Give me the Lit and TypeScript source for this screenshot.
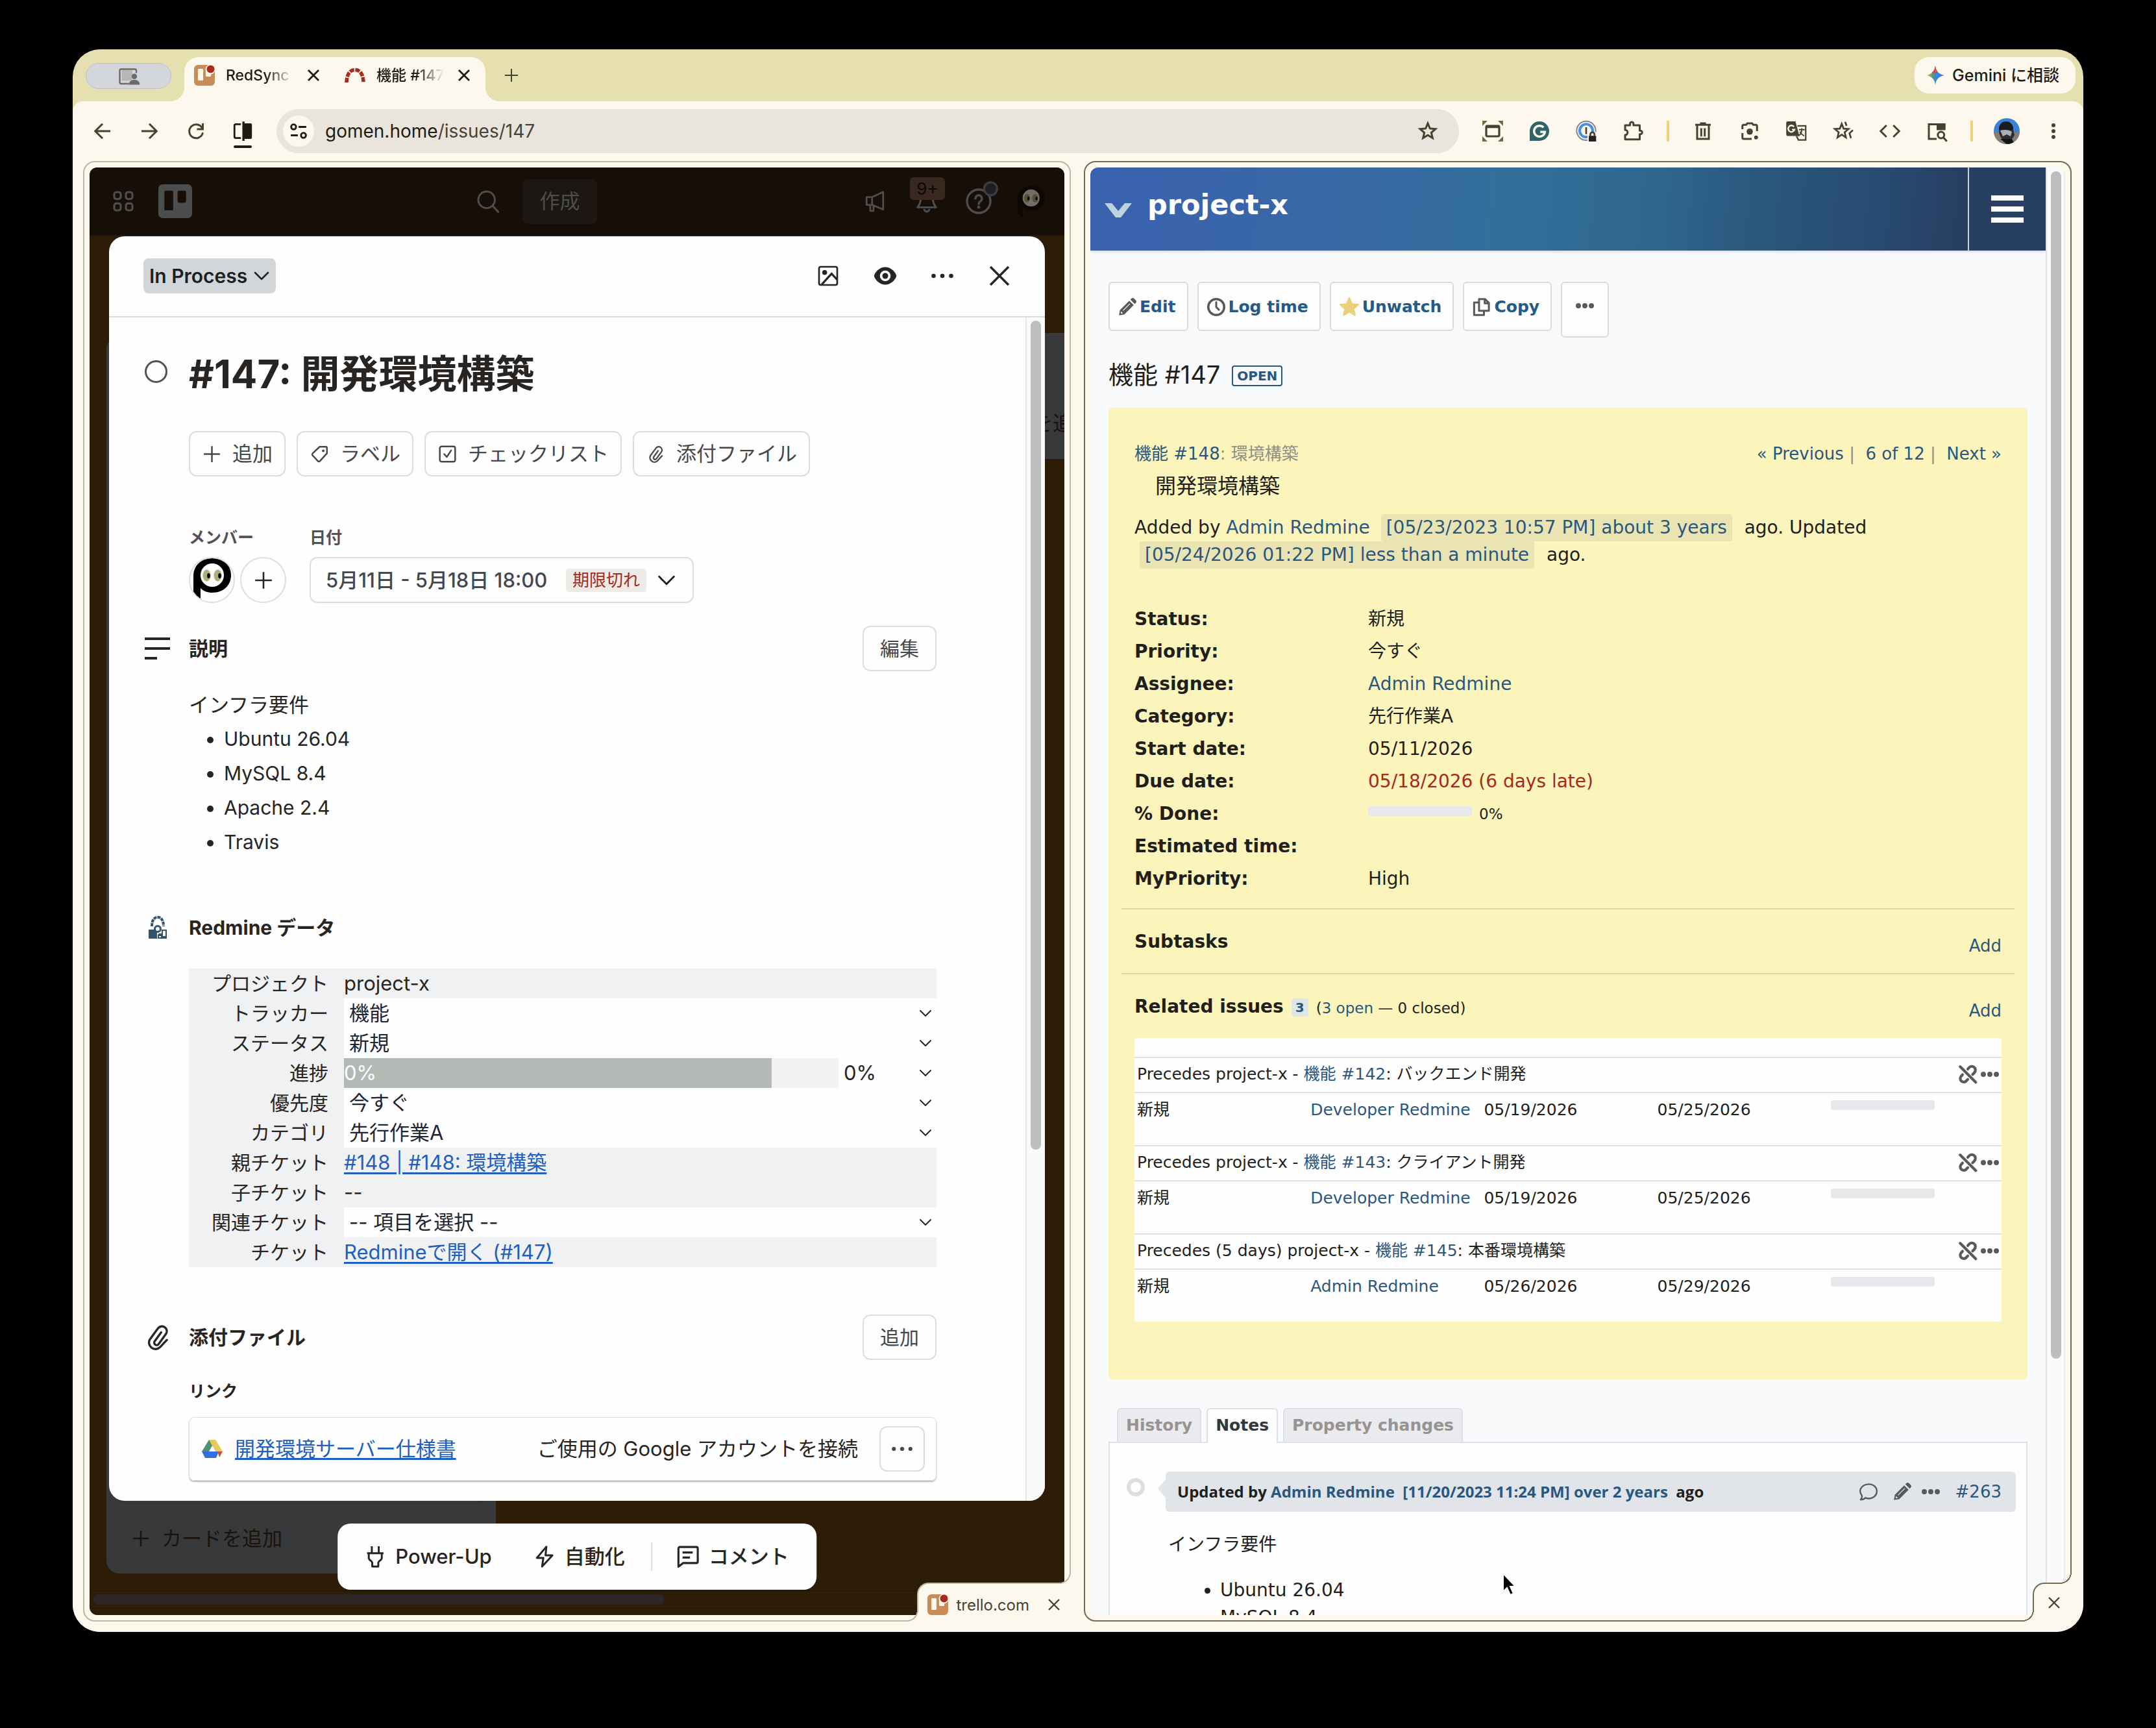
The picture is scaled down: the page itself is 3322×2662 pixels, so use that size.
import { LitElement, html, css, svg, nothing } from "lit";
import { customElement } from "lit/decorators.js";

/* ---------- shared styles ---------- */

const base = css`
  :host {
    display: block;
    box-sizing: border-box;
  }
  * {
    box-sizing: border-box;
  }
  button,
  select,
  input {
    font: inherit;
    color: inherit;
    margin: 0;
    padding: 0;
    border: 0;
    background: none;
  }
  button {
    display: inline-flex;
    align-items: center;
    justify-content: center;
    white-space: nowrap;
    cursor: pointer;
  }
  h1,
  h2,
  h3,
  p,
  ul {
    margin: 0;
    padding: 0;
    font-weight: inherit;
    font-size: inherit;
  }
  svg {
    display: block;
    flex: none;
    overflow: visible;
  }
  .line {
    fill: none;
    stroke: currentColor;
  }
  .round {
    stroke-linecap: round;
    stroke-linejoin: round;
  }
  .cream {
    stroke: #fdf8ee;
  }
  .steel {
    stroke: #85878a;
  }
  .azure {
    stroke: #4a8ee6;
  }
`;

/* ---------- icons ---------- */

const icon = (size: number, body: unknown, box = 24) =>
  html`<svg width=${size} height=${size} viewBox="0 0 ${box} ${box}" fill="currentColor" stroke-width="2" aria-hidden="true">${body}</svg>`;

const cross = svg`<path class="line" stroke-width="2.400" d="M4 4 20 20M20 4 4 20"/>`;
const smallCross = svg`<path class="line" stroke-width="2.800" d="M4 4 20 20M20 4 4 20"/>`;
const plus = svg`<path class="line" stroke-width="2.200" d="M12 1v22M1 12h22"/>`;
const chevron = svg`<path class="line round" d="M4 8l8 8 8-8"/>`;
const dots = svg`<circle cx="3" cy="12" r="2.200"/><circle cx="12" cy="12" r="2.200"/><circle cx="21" cy="12" r="2.200"/>`;
const fatDots = svg`<circle cx="3.400" cy="12" r="3.400"/><circle cx="12" cy="12" r="3.400"/><circle cx="20.600" cy="12" r="3.400"/>`;
const clip = svg`<path class="line round" d="M20.500 14.500l-6.200 6.600a6 6 0 0 1-9.500-7.200l7.700-10.400a4.500 4.500 0 0 1 7.300 5.200l-7 9.700a2.200 2.200 0 0 1-3.600-2.600l6-8.300"/>`;

const pencil = svg`
  <path fill-rule="evenodd" d="M1 23l1.200-7L14.600 3.600l5.800 5.800L8 21.800zM3.300 19.800l.9.900 2-.5-2.400-2.400zM6 16.200l9-9 .8.800-9 9z"/>
  <path d="M16 2.200l1.300-1.300a2.600 2.600 0 0 1 3.700 0l2.100 2.100a2.600 2.600 0 0 1 0 3.700L21.800 8z"/>`;

const trelloTab = svg`
  <rect width="32" height="32" rx="6" fill="#c88c58"/>
  <rect x="6" y="6" width="8" height="18" rx="1.500" fill="#fdf8ee"/>
  <rect x="18" y="6" width="8" height="12" rx="1.500" fill="#fdf8ee"/>
  <circle cx="25" cy="7" r="7.500" fill="#fdf8ee"/>
  <circle cx="25.500" cy="6.500" r="6" fill="#a92a20"/>`;

const redmineArc = svg`
  <path d="M3 27C3.500 13 9 7.500 16 7.500S28.500 13 29 27" fill="none" stroke="#a92a20" stroke-width="5.600" stroke-dasharray="7.200 1.600"/>`;

const face = svg`
  <path d="M5 59V28C5 11 17 0 34 0s29 10 29 26-12 27-29 27c-7 0-13-2-18-7v20c-5-2-9-4-11-7z" fill="#000"/>
  <circle cx="34" cy="26" r="18" fill="#fff"/>
  <ellipse cx="25.500" cy="26.500" rx="6" ry="9" fill="#a8ad82" stroke="#e5d796" stroke-width="1"/>
  <ellipse cx="42.500" cy="26.500" rx="6" ry="9" fill="#a8ad82" stroke="#e5d796" stroke-width="1"/>
  <ellipse cx="28.500" cy="27" rx="2.300" ry="4" fill="#000"/>
  <ellipse cx="45.500" cy="27" rx="2.300" ry="4" fill="#000"/>`;

/* ---------- browser chrome ---------- */

@customElement("browser-bar")
class BrowserBar extends LitElement {
  static styles = [
    base,
    css`
      :host {
        font-family: Inter, "Noto Sans CJK JP", sans-serif;
        color: #1f1b13;
      }
      .strip {
        display: flex;
        align-items: flex-start;
        height: 80px;
        padding: 12px 12px 0 20px;
        font-size: 23px;
        line-height: 32px;
        font-weight: 500;
      }
      .pill {
        width: 132px;
        height: 40px;
        margin-top: 9px;
        border: 1px solid #bfc1c4;
        border-radius: 20px;
        background: #d3d6da;
        color: #6d6b6a;
      }
      .tabs {
        position: relative;
        display: flex;
        height: 68px;
        margin-left: 20px;
        border-radius: 22px 22px 0 0;
        background: #fdf8ee;
      }
      .tabs::before,
      .tabs::after {
        content: "";
        position: absolute;
        bottom: 0;
        width: 22px;
        height: 22px;
      }
      .tabs::before {
        right: 100%;
        background: radial-gradient(circle at 0 0, transparent 22px, #fdf8ee 22px);
      }
      .tabs::after {
        left: 100%;
        background: radial-gradient(circle at 100% 0, transparent 22px, #fdf8ee 22px);
      }
      .tab {
        display: flex;
        align-items: center;
        width: 232px;
        height: 56px;
        padding-left: 15px;
      }
      .name {
        width: 104px;
        margin: 0 19px 0 17px;
        overflow: hidden;
        white-space: nowrap;
        mask-image: linear-gradient(90deg, #000 60%, transparent);
      }
      .new {
        width: 80px;
        height: 56px;
        color: #45422f;
      }
      .gemini {
        gap: 12px;
        height: 56px;
        margin-left: auto;
        padding: 0 25px 0 18px;
        border-radius: 22px;
        background: #fdf8ee;
        font-size: 25px;
      }
      .bar {
        display: flex;
        align-items: center;
        height: 92px;
        padding: 0 10px;
        border-radius: 16px 16px 0 0;
        background: #fdf8ee;
        color: #45422f;
      }
      .tool {
        width: 72px;
        height: 68px;
      }
      .split {
        flex-direction: column;
        gap: 5px;
        padding-top: 9px;
        color: #1f1b13;
      }
      .under {
        width: 28px;
        height: 4px;
        border-radius: 2px;
        background: currentColor;
      }
      .omni {
        flex: 1;
        display: flex;
        align-items: center;
        height: 68px;
        margin: 0 16px;
        padding: 0 20px 0 10px;
        border-radius: 34px;
        background: #e9e4dc;
      }
      .site {
        width: 48px;
        height: 48px;
        border-radius: 24px;
        background: #fdf8ee;
        color: #1f1b13;
      }
      .url {
        flex: 1;
        margin-left: 17px;
        font-size: 28px;
        line-height: 40px;
        color: #1f1b13;
        white-space: nowrap;
      }
      .path {
        color: #45423a;
      }
      .star {
        width: 56px;
        height: 56px;
      }
      .sep {
        width: 4px;
        height: 32px;
        margin: 0 16px;
        background: #efd27c;
      }
    `,
  ];

  private tool(label: string, body: unknown, size = 36) {
    return html`<button class="tool" aria-label=${label}>${icon(size, body)}</button>`;
  }

  render() {
    return html`
      <div class="strip">
        <button class="pill" aria-label="Shared tabs">
          ${icon(36, svg`
            <path fill="#b9b7b4" d="M5 6h11v11H5z"/>
            <path class="line" stroke-width="1.600" d="M12.500 20H4.500A1.500 1.500 0 0 1 3 18.500v-12A1.500 1.500 0 0 1 4.500 5h14A1.500 1.500 0 0 1 20 6.500V9"/>
            <circle cx="18" cy="12.500" r="2.800"/>
            <path d="M12.500 21c0-3.600 2.400-5 5.500-5s5.500 1.400 5.500 5z"/>`)}
        </button>
        <div class="tabs">
          <div class="tab">
            ${icon(32, trelloTab, 32)}<span class="name">RedSync</span>
            <button aria-label="Close tab">${icon(24, smallCross)}</button>
          </div>
          <div class="tab">
            ${icon(32, redmineArc, 32)}<span class="name">機能 #147</span>
            <button aria-label="Close tab">${icon(24, smallCross)}</button>
          </div>
        </div>
        <button class="new" aria-label="New tab">${icon(22, plus)}</button>
        <button class="gemini">
          <svg width="28" height="30" viewBox="0 0 28 30" aria-hidden="true">
            <defs>
              <linearGradient id="g" x1="0" y1="0" x2="1" y2="0">
                <stop offset="0" stop-color="#e8c04b" />
                <stop offset=".35" stop-color="#4c9f7c" />
                <stop offset=".6" stop-color="#3b7ded" />
              </linearGradient>
            </defs>
            <path fill="url(#g)" d="M14 0c1 9 5 13 14 15-9 2-13 6-14 15C13 21 9 17 0 15 9 13 13 9 14 0z" />
            <path fill="#d2504a" d="M14 0c.5 5 2 8 4 10l-7 2-3-1c3-2 5-5 6-11z" />
          </svg>
          Gemini に相談
        </button>
      </div>
      <div class="bar">
        ${this.tool("Back", svg`<path class="line" d="M20 12H5M12 4.500 4.500 12l7.500 7.500"/>`)}
        ${this.tool("Forward", svg`<path class="line" d="M4 12h15M12 4.500l7.500 7.500-7.500 7.500"/>`)}
        ${this.tool("Reload", svg`<path class="line" d="M18.600 9.500A7 7 0 1 0 19 13.500"/><path class="line" d="M19 4v6h-6"/>`)}
        <button class="tool split" aria-label="Split view">
          ${icon(34, svg`
            <path class="line" d="M10 4.500H4.500A1.500 1.500 0 0 0 3 6v12a1.500 1.500 0 0 0 1.500 1.500H10"/><path d="M13 3.500h7.500A1.500 1.500 0 0 1 22 5v14a1.500 1.500 0 0 1-1.500 1.500H13z"/>
            <path class="line" stroke-width="2.400" d="M12.800 1.500v21"/>`)}
          <span class="under"></span>
        </button>
        <div class="omni">
          <button class="site" aria-label="Site information">
            ${icon(26, svg`<g class="line" stroke-width="2.600"><circle cx="5" cy="6" r="3.500"/><path d="M12 6h11M1 18h10"/><circle cx="19" cy="18" r="3.500"/></g>`)}
          </button>
          <span class="url">gomen.home<span class="path">/issues/147</span></span>
          <button class="star" aria-label="Bookmark">
            ${icon(36, svg`<path class="line" d="M12 4l2.200 5.300 5.700.5-4.300 3.700 1.300 5.600L12 16.100l-4.900 3 1.300-5.600-4.300-3.700 5.700-.5z"/>`)}
          </button>
        </div>
        ${this.tool("Screenshot", svg`
          <path d="M0 0h6L0 6zM24 0h-6l6 6zM0 24h6l-6-6zM24 24h-6l6-6z" fill="#6d6a44"/>
          <rect class="line" x="4.500" y="6" width="15" height="12" rx="1.500" stroke-width="2.400"/><path d="M4 5h16v3.500H4z"/>`, 32)}
        ${this.tool("Grammar", svg`
          <path fill="#2e6468" d="M12 0a12 12 0 1 1 0 24H0V12A12 12 0 0 1 12 0z"/>
          <path class="line cream" stroke-width="2.800" d="M17 7.500A6.700 6.700 0 1 0 18.700 13H13"/>`, 30)}
        ${this.tool("Passwords", svg`
          <circle class="line steel" cx="12" cy="11.500" r="11" stroke-width="1.500"/>
          <circle class="line azure" cx="12" cy="11.500" r="7.500" stroke-width="3"/>
          <path class="line" d="M12 7.500v8"/>
          <rect x="13.500" y="13" width="12" height="12" fill="#fdf8ee"/>
          <path fill="#222" d="M15 17.500h8.500V24H15z"/><path class="line" d="M16.800 18v-2.200a2.400 2.400 0 0 1 4.800 0V18"/>`, 32)}
        ${this.tool("Extensions", svg`<path class="line" stroke-linejoin="round" d="M4 6h5V4.500a1.800 1.800 0 0 1 3.600 0V6H19v5.500h.7a1.800 1.800 0 0 1 0 3.600H19V20.500H4V16a2.600 2.600 0 0 0 0-5.200z"/>`)}
        <span class="sep"></span>
        ${this.tool("Clear data", svg`<path class="line" d="M6 6.500V20h12V6.500M4 5.500h16M9 4h6M10.200 9v8.500M13.800 9v8.500"/>`)}
        ${this.tool("Lens", svg`
          <path class="line" d="M4.500 10V7A1.500 1.500 0 0 1 6 5.500h2.500l1-1.500h5l1 1.500H18A1.500 1.500 0 0 1 19.500 7v5M4.500 14v4.500A1.500 1.500 0 0 0 6 20h8"/>
          <circle cx="12" cy="12.500" r="3.200"/><circle cx="18.500" cy="18.500" r="2"/>`)}
        ${this.tool("Translate", svg`
          <path d="M3 2h8l4 15H3a1.500 1.500 0 0 1-1.500-1.500v-12A1.500 1.500 0 0 1 3 2z"/>
          <path class="line" stroke-width="1.500" d="M13 6.500h8.500V21H14l-2-4"/>
          <path class="line cream" stroke-width="1.600" d="M9.500 7.500A3.300 3.300 0 1 0 10 10.500H7.500"/>
          <path class="line" stroke-width="1.300" d="M14.500 10.500h6M17.500 9v1.500c0 3-1.500 5-3.500 6.500M15.500 12.500c1 2 2.500 3.500 4.500 4.500"/>`)}
        ${this.tool("Reading list", svg`
          <path class="line" stroke-width="1.800" d="M10.500 4.500l1.900 4.900 5.100.4-4 3.400 1.300 5.300-4.300-2.900-4.300 2.900 1.200-5.300-4-3.400 5.200-.4z"/>
          <path class="line" stroke-width="1.800" d="M14 2.500l1.500 4M22 11l-3.500 3.200 1.500 5"/>`)}
        ${this.tool("Developer tools", svg`<path class="line" d="M8.500 6l-6 6 6 6M15.500 6l6 6-6 6"/>`)}
        ${this.tool("Page search", svg`
          <path class="line" d="M12 20H4V5h16v5"/><path d="M12 4h9v7h-9z"/>
          <circle class="line" cx="16.500" cy="16" r="3.300"/><path class="line" d="M19 18.500l3.500 4"/>`)}
        <span class="sep"></span>
        <button class="tool" aria-label="Profile">
          ${icon(40, svg`
            <clipPath id="av"><circle cx="20" cy="20" r="20"/></clipPath>
            <g clip-path="url(#av)">
              <rect width="40" height="40" fill="#3b82d6"/><rect y="22" width="40" height="18" fill="#8b7a70"/>
              <ellipse cx="19" cy="16" rx="11" ry="11" fill="#1b1c20"/><path d="M8 22c3 16 18 18 24 4l-2-8H9z" fill="#2b2c30"/>
              <path d="M10 19c6-2 14-1 18 2l-2 7-6-3-6 3z" fill="#a9adb0"/><path d="M10 32l10 8h12l-4-8z" fill="#131417"/>
            </g>`, 40)}
        </button>
        ${this.tool("Menu", svg`<circle cx="12" cy="6" r="2"/><circle cx="12" cy="12" r="2"/><circle cx="12" cy="18" r="2"/>`)}
      </div>
    `;
  }
}

/* ---------- Trello pane ---------- */

type Field = { label: string; kind: "text" | "select" | "link" | "progress"; value: string };

const fields: Field[] = [
  { label: "プロジェクト", kind: "text", value: "project-x" },
  { label: "トラッカー", kind: "select", value: "機能" },
  { label: "ステータス", kind: "select", value: "新規" },
  { label: "進捗", kind: "progress", value: "0%" },
  { label: "優先度", kind: "select", value: "今すぐ" },
  { label: "カテゴリ", kind: "select", value: "先行作業A" },
  { label: "親チケット", kind: "link", value: "#148 | #148: 環境構築" },
  { label: "子チケット", kind: "text", value: "--" },
  { label: "関連チケット", kind: "select", value: "-- 項目を選択 --" },
  { label: "チケット", kind: "link", value: "Redmineで開く (#147)" },
];

@customElement("trello-pane")
class TrelloPane extends LitElement {
  static styles = [
    base,
    css`
      :host {
        position: relative;
        height: 100%;
        overflow: hidden;
        border-radius: 12px 12px 0 12px;
        background: #2d1c06;
        font-family: Inter, "Noto Sans CJK JP", sans-serif;
        font-size: 31px;
        line-height: 46px;
        color: #272422;
      }
      .top {
        display: flex;
        align-items: center;
        height: 106px;
        padding: 0 31px 0 36px;
        border-bottom: 2px solid #221a10;
        background: #160e07;
        color: #4c4d4d;
      }
      .logo {
        margin: 0 auto 0 38px;
      }
      .create {
        width: 115px;
        height: 69px;
        margin: 0 407px 0 35px;
        border-radius: 8px;
        background: #1c1712;
      }
      .top-icons {
        display: grid;
        grid-auto-flow: column;
        grid-auto-columns: 42px;
        justify-items: center;
        align-items: center;
        gap: 38px;
      }
      .bell {
        position: relative;
      }
      .badge {
        position: absolute;
        left: -7px;
        top: -18px;
        width: 54px;
        height: 35px;
        border-radius: 6px;
        background: #38281f;
        color: #0c0805;
        font-size: 26px;
        line-height: 35px;
        text-align: center;
      }
      .column {
        position: absolute;
        left: 26px;
        top: 260px;
        bottom: 64px;
        width: 600px;
        border-radius: 20px;
        background: #38393a;
        color: #1a130d;
        display: flex;
        flex-direction: column;
        justify-content: flex-end;
      }
      .card-edge {
        display: flex;
        justify-content: space-between;
        height: 40px;
        margin: 0 16px;
        padding: 0 40px 0 106px;
        border: 1px solid #303133;
        border-top: 0;
        border-radius: 0 0 12px 12px;
      }
      .add-card {
        display: flex;
        align-items: center;
        gap: 19px;
        height: 108px;
        padding-left: 40px;
      }
      .next {
        position: absolute;
        right: 0;
        top: 255px;
        width: 60px;
        height: 194px;
        padding: 116px 0 0 11px;
        background: #38393a;
        color: #1a130d;
        overflow: hidden;
        white-space: nowrap;
      }
      .hscroll {
        position: absolute;
        left: 0;
        right: 0;
        bottom: 10px;
        height: 28px;
        padding: 5px 6px;
        border-top: 1px solid #221505;
        border-bottom: 1px solid #221505;
      }
      .hthumb {
        width: 59%;
        height: 16px;
        border-radius: 6px;
        background: #2e2624;
      }
      .modal {
        position: absolute;
        inset: 106px 30px 176px 30px;
        display: flex;
        flex-direction: column;
        overflow: hidden;
        border-radius: 24px;
        background: #fefefe;
      }
      .modal-head {
        flex: none;
        display: flex;
        align-items: center;
        height: 125px;
        padding: 0 40px 2px 53px;
        border-bottom: 2px solid #dcdde1;
      }
      .status {
        gap: 7px;
        height: 54px;
        margin-right: auto;
        padding: 0 7px 0 9px;
        border-radius: 8px;
        background: #d3d6d9;
        color: #1e1f21;
        font-weight: 600;
        font-size: 30px;
      }
      .head-btn {
        width: 88px;
        height: 60px;
      }
      .head-btn.last {
        width: 60px;
        margin-left: 14px;
      }
      .modal-main {
        flex: 1;
        min-height: 0;
        display: flex;
      }
      .content {
        flex: 1;
        min-width: 0;
        padding: 51px 137px 30px 55px;
        display: grid;
        grid-template-columns: 68px minmax(0, 1fr);
        align-content: start;
      }
      .scroll {
        width: 30px;
        padding: 5px 6px;
        border-left: 2px solid #e4e5e9;
        background: #fafafb;
      }
      .thumb {
        height: calc(70% + 8px);
        border-radius: 8px;
        background: #bcbdbe;
      }
      .wide {
        grid-column: 2;
      }
      .ring {
        width: 35px;
        height: 35px;
        margin-top: 15px;
        border: 3px solid #505258;
        border-radius: 50%;
        appearance: none;
      }
      h1 {
        font-size: 60px;
        line-height: 72px;
        font-weight: 700;
        white-space: nowrap;
      }
      .actions {
        display: flex;
        gap: 17px;
        margin-top: 52px;
      }
      .btn {
        gap: 18px;
        height: 70px;
        padding: 0 18px 0 20px;
        border: 2px solid #dcdde1;
        border-radius: 12px;
        color: #44474b;
      }
      .meta {
        display: flex;
        gap: 36px;
        margin-top: 76px;
      }
      .meta h3,
      .links {
        font-size: 25px;
        line-height: 36px;
        font-weight: 600;
        color: #505258;
      }
      .meta-row {
        display: flex;
        gap: 8px;
        margin-top: 12px;
      }
      .round-btn {
        width: 71px;
        height: 71px;
        border: 2px solid #dcdde1;
        border-radius: 50%;
        overflow: hidden;
      }
      .date {
        gap: 14px;
        width: 592px;
        height: 71px;
        padding: 0 23px;
        justify-content: flex-start;
        border: 2px solid #dcdde1;
        border-radius: 12px;
        color: #44474b;
        font-weight: 500;
      }
      .date svg {
        color: #1e1f21;
      }
      .late {
        margin-left: auto;
        padding: 0 10px;
        border-radius: 4px;
        background: #eeebe7;
        color: #a52a20;
        font-size: 26px;
        line-height: 36px;
        font-weight: 400;
      }
      .sec-icon {
        align-self: center;
      }
      .sec {
        display: flex;
        align-items: center;
        justify-content: space-between;
        font-size: 30px;
        font-weight: 700;
      }
      .sec .btn {
        width: 114px;
        padding: 0;
        font-weight: 400;
      }
      .s1 {
        margin-top: 35px;
      }
      .s2 {
        margin-top: 82px;
      }
      .s3 {
        margin-top: 73px;
      }
      .desc {
        margin-top: 25px;
        line-height: 53px;
      }
      .desc ul {
        padding-left: 54px;
        font-size: 30px;
      }
      .data {
        width: 100%;
        margin-top: 40px;
        border-spacing: 0;
        table-layout: fixed;
        background: #f0f1f3;
      }
      .data th {
        width: 239px;
        height: 46px;
        padding: 0 24px 0 0;
        text-align: right;
        font-size: 30px;
        font-weight: 400;
        white-space: nowrap;
      }
      .data td {
        padding: 0;
      }
      .pick {
        display: flex;
        align-items: center;
        justify-content: space-between;
        height: 46px;
        padding-right: 5px;
        background: #fefefe;
      }
      .pick select {
        flex: 1;
        height: 46px;
        padding-left: 8px;
        appearance: none;
        margin-right: 20px;
        color: #1f2533;
      }
      .meter {
        width: 762px;
        height: 46px;
        background: #f2f2f4;
      }
      .fill {
        height: 46px;
        color: #fefefe;
        background: #b3bab6;
      }
      .percent {
        flex: 1;
        padding-left: 8px;
      }
      a {
        color: #1f5fc4;
        text-underline-offset: 4px;
      }
      .links {
        margin-top: 30px;
        color: #272422;
      }
      .file {
        display: flex;
        align-items: center;
        height: 98px;
        margin-top: 22px;
        padding: 0 17px 0 19px;
        border: 1px solid #dcdde1;
        border-radius: 8px;
        box-shadow: 0 2px 2px #b7babd;
        white-space: nowrap;
      }
      .file a {
        margin: 0 auto 0 19px;
        text-underline-offset: 3px;
      }
      .file .btn {
        width: 70px;
        margin-left: 33px;
        padding: 0;
      }
      .dock {
        position: absolute;
        left: 50%;
        bottom: 39px;
        transform: translateX(-50%);
        display: flex;
        align-items: center;
        height: 102px;
        padding: 0 42px;
        border-radius: 20px;
        background: #fefefe;
        font-weight: 500;
      }
      .dock button {
        gap: 15px;
      }
      .dock .auto {
        margin: 0 40px 0 65px;
      }
      .dock .rule {
        width: 2px;
        height: 44px;
        margin-right: 38px;
        background: #dcdde1;
      }
    `,
  ];

  private field(f: Field, i: number) {
    const id = `f${i}`;
    const arrow = icon(24, chevron);
    const cell =
      f.kind === "select"
        ? html`<div class="pick"><select id=${id}><option>${f.value}</option></select>${arrow}</div>`
        : f.kind === "link"
          ? html`<a href="#">${f.value}</a>`
          : f.kind === "progress"
            ? html`<div class="pick">
                <div class="meter"><div class="fill" style="width:86.5%">${f.value}</div></div>
                <span class="percent">${f.value}</span>${arrow}
              </div>`
            : f.value;
    return html`<tr>
      <th scope="row">${f.kind === "select" ? html`<label for=${id}>${f.label}</label>` : f.label}</th>
      <td>${cell}</td>
    </tr>`;
  }

  render() {
    return html`
      <header class="top">
        ${icon(32, svg`<g class="line" stroke-width="2.400"><rect x="1.500" y="1.500" width="7.500" height="8" rx="2.500"/><rect x="15" y="1.500" width="7.500" height="8" rx="2.500"/><rect x="1.500" y="14.500" width="7.500" height="8" rx="2.500"/><rect x="15" y="14.500" width="7.500" height="8" rx="2.500"/></g>`)}
        <span class="logo">${icon(52, svg`<path fill-rule="evenodd" d="M3 0h18a3 3 0 0 1 3 3v18a3 3 0 0 1-3 3H3a3 3 0 0 1-3-3V3a3 3 0 0 1 3-3zM5.300 4.500h4.200a1 1 0 0 1 1 1V17.500a1 1 0 0 1-1 1H5.300a1 1 0 0 1-1-1V5.500a1 1 0 0 1 1-1zM14.700 4.500h4a1 1 0 0 1 1 1V12a1 1 0 0 1-1 1h-4a1 1 0 0 1-1-1V5.500a1 1 0 0 1 1-1z"/>`)}</span>
        ${icon(36, svg`<circle class="line" cx="10.500" cy="10.500" r="8.500"/><path class="line round" d="M17 17l5.500 6"/>`)}
        <button class="create">作成</button>
        <div class="top-icons">
          ${icon(34, svg`<path class="line round" d="M3 7.500h6L21 2v19L9 16H3zM9 7.500V16M7 16v6.500h3.500V17"/>`)}
          <span class="bell">${icon(38, svg`<path class="line" stroke-linejoin="round" d="M6 10a6 6 0 0 1 12 0c0 3 .5 5 3 8H3c2.500-3 3-5 3-8zM9.500 19.500a2.500 2.500 0 0 0 5 0"/>`)}<span class="badge">9+</span></span>
          ${icon(40, svg`
            <circle class="line" cx="12" cy="12" r="10.800"/>
            <path class="line round" d="M9 9.500a3 3 0 1 1 4.500 2.600c-1 .6-1.500 1-1.500 2.400"/><circle cx="12" cy="17.500" r="1.400"/>
            <circle cx="23" cy="0.500" r="6" fill="#1d1d22" stroke="#3c3d42" stroke-width="2"/>`)}
          ${icon(48, svg`<g opacity=".4">${face}</g>`, 66)}
        </div>
      </header>

      <div class="column">
        <div class="card-edge">
          ${icon(24, svg`<circle cx="12" cy="-5" r="12"/>`)}
          ${icon(48, svg`<path d="M3-10h7V9l-5-2zM10 7c6 3 12-1 12-6V-8H10z"/>`)}
        </div>
        <div class="add-card">${icon(26, plus)} カードを追加</div>
      </div>
      <div class="next">を追</div>
      <div class="hscroll"><div class="hthumb"></div></div>

      <section class="modal">
        <div class="modal-head">
          <button class="status">In Process ${icon(30, chevron)}</button>
          <button class="head-btn" aria-label="Cover">
            ${icon(32, svg`<rect class="line" x="1.500" y="1.500" width="21" height="21" rx="2"/><circle cx="8" cy="8" r="2.800"/><path class="line" stroke-width="2.400" d="M4.500 22L16 9.500l6.500 7"/>`)}
          </button>
          <button class="head-btn" aria-label="Watch">
            ${icon(36, svg`<path d="M12 3c6 0 11 5.500 11.500 9-.5 3.500-5.500 9-11.500 9S1 15.500.5 12C1 8.500 6 3 12 3z"/><circle cx="12" cy="12" r="5.500" fill="#fefefe"/><circle cx="12" cy="12" r="3"/>`)}
          </button>
          <button class="head-btn" aria-label="Actions">${icon(36, dots)}</button>
          <button class="head-btn last" aria-label="Close">${icon(42, svg`<path class="line" d="M4 4 20 20M20 4 4 20"/>`)}</button>
        </div>
        <div class="modal-main">
          <div class="content">
            <input class="ring" type="checkbox" aria-label="完了" />
            <h1>#147: 開発環境構築</h1>

            <div class="actions wide">
              <button class="btn">${icon(27, plus)}追加</button>
              <button class="btn">
                ${icon(27, svg`<path class="line" stroke-width="2.200" stroke-linejoin="round" d="M12 2h8.500A1.500 1.500 0 0 1 22 3.500V11L12.500 21.500a2 2 0 0 1-3 0L2.500 14a2 2 0 0 1 0-3z"/><circle cx="17" cy="7.500" r="1.800"/>`)}ラベル
              </button>
              <button class="btn">
                ${icon(27, svg`<rect class="line" stroke-width="2.200" x="1.500" y="1.500" width="21" height="21" rx="2.500"/><path class="line round" stroke-width="2.200" d="M7.500 12l3.500 4 6-9"/>`)}チェックリスト
              </button>
              <button class="btn">${icon(27, clip)}添付ファイル</button>
            </div>

            <div class="meta wide">
              <div>
                <h3>メンバー</h3>
                <div class="meta-row">
                  <button class="round-btn" aria-label="メンバー">${icon(67, face, 67)}</button>
                  <button class="round-btn" aria-label="メンバーを追加">${icon(28, plus)}</button>
                </div>
              </div>
              <div>
                <h3>日付</h3>
                <div class="meta-row">
                  <button class="date">5月11日 - 5月18日 18:00<span class="late">期限切れ</span>${icon(34, chevron)}</button>
                </div>
              </div>
            </div>

            <span class="sec-icon s1">
              <svg width="39" height="34" viewBox="0 0 39 34" fill="currentColor" aria-hidden="true"><path d="M0 0h39v4H0zM0 15h39v4H0zM0 30h19v4H0z" /></svg>
            </span>
            <div class="sec s1"><h2>説明</h2><button class="btn">編集</button></div>
            <div class="desc wide">
              <p>インフラ要件</p>
              <ul>
                <li>Ubuntu 26.04</li>
                <li>MySQL 8.4</li>
                <li>Apache 2.4</li>
                <li>Travis</li>
              </ul>
            </div>

            <span class="sec-icon s2">
              <svg width="40" height="36" viewBox="0 0 40 36" fill="#34536f" aria-hidden="true">
                <path d="M11 16c0-10 4-14 9-14s9 4 9 14" fill="none" stroke="#34536f" stroke-width="4" stroke-dasharray="5 1" />
                <path d="M6 21h9l4 5v9H7a1 1 0 0 1-1-1z" />
                <circle cx="20" cy="20" r="4.500" fill="#fefefe" stroke="#34536f" stroke-width="3" />
                <path fill-rule="evenodd" d="M22 27h4v-6h8v14H20v-6zM28 23v8h4v-8zM22 31h3v2h-3z" />
              </svg>
            </span>
            <div class="sec s2"><h2>Redmine データ</h2></div>
            <table class="data wide">
              <tbody>
                ${fields.map((f, i) => this.field(f, i))}
              </tbody>
            </table>

            <span class="sec-icon s3">${icon(40, clip)}</span>
            <div class="sec s3"><h2>添付ファイル</h2><button class="btn">追加</button></div>
            <h3 class="links wide">リンク</h3>
            <div class="file wide">
              <svg width="32" height="28" viewBox="0 0 32 28" aria-hidden="true">
                <path fill="#4f9174" d="M11 0h5l3 6L7 26 0 18z" />
                <path fill="#e9c95c" d="M11 0h10l11 18H21z" />
                <path fill="#2f6fe0" d="M6 18h20l-4 10H5L0 18z" />
                <path fill="#c9523b" d="M24 18h8l-5 9z" />
                <path fill="#fefefe" d="M16 9l5 9H11z" />
              </svg>
              <a href="#">開発環境サーバー仕様書</a>
              <span>ご使用の Google アカウントを接続</span>
              <button class="btn" aria-label="その他">${icon(34, dots)}</button>
            </div>
          </div>
          <div class="scroll"><div class="thumb"></div></div>
        </div>
      </section>

      <nav class="dock">
        <button>
          ${icon(32, svg`<path class="line" stroke-width="2.200" stroke-linejoin="round" d="M8 0v7M16 0v7M2.500 8h19M4.500 8v6c0 2 4 3 4 5v4.500h7V19c0-2 4-3 4-5V8"/>`)}Power-Up
        </button>
        <button class="auto">
          ${icon(32, svg`<path class="line" stroke-width="2.200" stroke-linejoin="round" d="M14 .5L3 13.500h7.500l-1.500 10L21 10.500h-8z"/>`)}自動化
        </button>
        <span class="rule"></span>
        <button>
          ${icon(34, svg`<path class="line" stroke-width="2.200" stroke-linejoin="round" d="M3 1.500h18A1.500 1.500 0 0 1 22.500 3v14.500A1.500 1.500 0 0 1 21 19H6.500l-5 4V3A1.500 1.500 0 0 1 3 1.500z"/><path class="line" stroke-width="2.200" d="M6 7.500h11M6 13h8"/>`)}コメント
        </button>
      </nav>
    `;
  }
}

/* ---------- Redmine pane ---------- */

const relations = [
  { lead: "Precedes project-x - ", id: "機能 #142", title: "バックエンド開発", who: "Developer Redmine", start: "05/19/2026", due: "05/25/2026" },
  { lead: "Precedes project-x - ", id: "機能 #143", title: "クライアント開発", who: "Developer Redmine", start: "05/19/2026", due: "05/25/2026" },
  { lead: "Precedes (5 days) project-x - ", id: "機能 #145", title: "本番環境構築", who: "Admin Redmine", start: "05/26/2026", due: "05/29/2026" },
];

@customElement("redmine-pane")
class RedminePane extends LitElement {
  static styles = [
    base,
    css`
      :host {
        position: relative;
        height: 100%;
        display: flex;
        overflow: hidden;
        border-radius: 12px 12px 0 12px;
        background: #f9fafc;
        font-family: "DejaVu Sans", "Noto Sans CJK JP", sans-serif;
        font-size: 28px;
        line-height: 42px;
        color: #221e1b;
      }
      a {
        color: #2a5780;
        text-decoration: none;
      }
      .page {
        flex: 1;
        min-width: 0;
      }
      .scroll {
        width: 30px;
        padding: 6px 6px;
        border-left: 2px solid #e1e3e8;
        border-right: 2px solid #ececee;
        background: #fafafc;
      }
      .thumb {
        width: 16px;
        height: calc(82% + 10px);
        border-radius: 8px;
        background: #bbbdbf;
      }
      .top {
        display: flex;
        align-items: center;
        height: 128px;
        background: linear-gradient(95deg, #3a61af 0%, #3869a4 28%, #32709b 43%, #2f678e 59%, #2b587f 69%, #284a70 83%, #273f61 91%);
        box-shadow: 0 2px 4px #d5dae2;
        color: #fefefe;
      }
      .project {
        gap: 24px;
        margin: 0 auto 14px 22px;
        font-size: 43px;
        font-weight: 700;
        line-height: 60px;
      }
      .project svg {
        margin-top: 18px;
      }
      .burger {
        width: 120px;
        height: 128px;
        border-left: 2px solid #c8d0da;
      }
      .body {
        padding: 48px 28px 0;
      }
      .tools {
        display: flex;
        align-items: flex-start;
        gap: 14px;
        height: 86px;
        font-size: 25px;
        font-weight: 700;
        color: #235a87;
      }
      .tools button {
        gap: 5px;
        height: 76px;
        padding: 2px 17px 0 13px;
        border: 2px solid #d9dadd;
        border-radius: 6px;
        background: #fefefe;
      }
      .tools svg,
      .gray {
        color: #58595c;
      }
      .tools .more {
        width: 74px;
        height: 86px;
        padding: 0 0 12px;
      }
      .headline {
        display: flex;
        align-items: center;
        gap: 18px;
        margin: 32px 0 26px;
        font-family: Inter, "Noto Sans CJK JP", sans-serif;
        font-size: 38px;
        line-height: 50px;
        white-space: nowrap;
      }
      .open {
        margin-top: 4px;
        padding: 0 6px;
        border: 2px solid #2a5780;
        border-radius: 4px;
        font-family: "DejaVu Sans", sans-serif;
        font-size: 20px;
        font-weight: 700;
        line-height: 28px;
        color: #2a5780;
      }
      .issue {
        padding: 53px 40px 89px;
        border-radius: 6px;
        background: #fbf4bb;
      }
      .trail {
        display: flex;
        justify-content: space-between;
        font-size: 26px;
        line-height: 36px;
        color: #8f8f8a;
        white-space: pre;
      }
      .subject {
        margin: 6px 0 17px 32px;
        font-size: 32px;
        line-height: 52px;
      }
      .when {
        margin: 0 10px 0 8px;
        padding: 4px 8px 5px;
        border-radius: 4px;
        background: #eae4b3;
        white-space: nowrap;
      }
      .author {
        padding-right: 120px;
      }
      .attrs {
        margin: 53px 0 0;
        display: grid;
        grid-template-columns: 360px 1fr;
        line-height: 50px;
      }
      .attrs dt {
        font-weight: 700;
      }
      .attrs dd {
        margin: 0;
      }
      .overdue {
        color: #a5291f;
      }
      .done {
        display: flex;
        gap: 11px;
        font-size: 23px;
      }
      .progress {
        display: block;
        width: 160px;
        height: 15px;
        border-radius: 3px;
        background: #e7e8ec;
      }
      .done .progress {
        margin-top: 13px;
      }
      .block {
        display: flex;
        align-items: center;
        height: 100px;
        margin: 0 -20px;
        padding: 2px 20px 0;
        border-top: 2px solid #ddd7a4;
      }
      .first {
        margin-top: 20px;
      }
      .block h3 {
        font-weight: 700;
      }
      .count {
        margin: 2px 12px 0 12px;
        padding: 0 6px;
        border-radius: 4px;
        background: #dfe7e6;
        color: #2a5780;
        font-size: 20px;
        font-weight: 700;
        line-height: 28px;
      }
      .sum {
        font-size: 23px;
        padding-top: 4px;
      }
      .add {
        margin: 12px 0 0 auto;
        font-size: 26px;
      }
      .rel {
        width: 100%;
        padding-top: 29px;
        border-spacing: 0;
        table-layout: fixed;
        border-radius: 4px;
        background: #fefefe;
        font-size: 25px;
        line-height: 36px;
      }
      .rel td {
        height: 54px;
        padding: 0 4px 2px;
        border-top: 2px solid #dee0e5;
        white-space: nowrap;
      }
      .rel .info td {
        height: 82px;
        padding-top: 8px;
        vertical-align: top;
      }
      .rel .info .progress {
        margin-top: 3px;
      }
      .rel-row {
        display: flex;
        align-items: center;
        gap: 6px;
      }
      .rel-text {
        flex: 1;
      }
      .tabs {
        display: flex;
        gap: 8px;
        margin-top: 44px;
        padding-left: 13px;
        font-size: 25px;
        font-weight: 700;
      }
      .tabs a {
        height: 52px;
        padding: 0 12px;
        border: 2px solid #dcdfe6;
        border-bottom: 0;
        border-radius: 6px 6px 0 0;
        background: #eaebef;
        color: #989390;
        line-height: 50px;
      }
      .tabs .on {
        height: 54px;
        margin-bottom: -2px;
        background: #fefefe;
        color: #35373a;
      }
      .journal {
        display: grid;
        grid-template-columns: 74px minmax(0, 1fr);
        padding: 44px 16px 0 12px;
        border: 2px solid #dfe2e8;
        background: #fefefe;
      }
      .dot {
        width: 28px;
        height: 28px;
        margin: 10px 0 0 14px;
        border: 6px solid #dcdee3;
        border-radius: 50%;
      }
      .note-head {
        position: relative;
        display: flex;
        align-items: center;
        height: 62px;
        padding: 0 22px 0 18px;
        border-radius: 6px;
        background: #e1e4e9;
        font-family: "Open Sans", "DejaVu Sans", sans-serif;
        font-size: 24px;
        font-weight: 700;
      }
      .note-head::before {
        content: "";
        position: absolute;
        right: 100%;
        top: 12px;
        border: 14px solid transparent;
        border-left-width: 0;
        border-right: 12px solid #e1e4e9;
      }
      .note-icons {
        display: flex;
        align-items: center;
        margin-left: auto;
        gap: 24px;
      }
      .note-icons svg + svg + svg {
        margin-left: -8px;
      }
      .num {
        font-family: "DejaVu Sans", sans-serif;
        font-size: 26px;
        font-weight: 400;
      }
      .note {
        grid-column: 2;
        padding: 30px 4px 0;
      }
      .note ul {
        padding: 28px 0 200px 80px;
      }
    `,
  ];

  private row(r: (typeof relations)[number]) {
    return html`
      <tr>
        <td colspan="5">
          <div class="rel-row">
            <span class="rel-text">${r.lead}<a href="#">${r.id}</a>: ${r.title}</span>
            <button class="gray" aria-label="Delete relation">
              ${icon(28, svg`
                <path class="line round" stroke-width="3.600" d="M12 5l1.500-1.700a4.800 4.800 0 0 1 7.500 6c-.7 1.200-1.600 2-2.600 2.900M5 12.500l-2 2.300a4.600 4.600 0 0 0 6.500 6.400l2.500-2.500M2 2l20.500 20.500"/>`)}
            </button>
            <button class="gray" aria-label="Actions">${icon(28, fatDots)}</button>
          </div>
        </td>
      </tr>
      <tr class="info">
        <td>新規</td>
        <td><a href="#">${r.who}</a></td>
        <td>${r.start}</td>
        <td>${r.due}</td>
        <td><span class="progress"></span></td>
      </tr>
    `;
  }

  render() {
    return html`
      <div class="page">
        <header class="top">
          <button class="project">
            <svg width="42" height="22" viewBox="0 0 42 22" fill="#bfd3de" aria-hidden="true"><path d="M0 0h11l10 12L31 0h11L25 22h-8z" /></svg>
            project-x
          </button>
          <button class="burger" aria-label="Menu">
            <svg width="50" height="42" viewBox="0 0 50 42" fill="#fefefe" aria-hidden="true"><path d="M0 0h50v8H0zM0 17h50v8H0zM0 34h50v8H0z" /></svg>
          </button>
        </header>
        <div class="body">
          <div class="tools">
            <button>${icon(28, pencil)}Edit</button>
            <button>${icon(28, svg`<circle class="line" cx="12" cy="12" r="10.500" stroke-width="3"/><path class="line round" d="M12 5.500V12l3.500 3.500" stroke-width="2.600"/>`)}Log time</button>
            <button>${icon(30, svg`<path fill="#ecd07a" stroke="#ecd07a" stroke-linejoin="round" d="M12 1l3.200 7.300 7.800.7-5.900 5.200 1.800 7.800-6.900-4.200L5.100 22l1.800-7.800L1 9l7.800-.7z"/>`)}Unwatch</button>
            <button>${icon(28, svg`<path class="line round" stroke-width="2.600" d="M8.500 1.500h8l5 5V17h-13zM16 2v5h5M8 6H2v16.500h13V18"/>`)}Copy</button>
            <button class="more" aria-label="More">${icon(28, fatDots)}</button>
          </div>
          <h2 class="headline">機能 #147 <span class="open">OPEN</span></h2>

          <section class="issue">
            <div class="trail">
              <span><a href="#">機能 #148</a>: 環境構築</span>
              <span><a href="#">« Previous</a> |  <a href="#">6 of 12</a> |  <a href="#">Next »</a></span>
            </div>
            <h3 class="subject">開発環境構築</h3>
            <p class="author">
              Added by <a href="#">Admin Redmine</a> <a class="when" href="#">[05/23/2023 10:57 PM] about 3 years</a> ago. Updated
              <a class="when" href="#">[05/24/2026 01:22 PM] less than a minute</a> ago.
            </p>
            <dl class="attrs">
              <dt>Status:</dt><dd>新規</dd>
              <dt>Priority:</dt><dd>今すぐ</dd>
              <dt>Assignee:</dt><dd><a href="#">Admin Redmine</a></dd>
              <dt>Category:</dt><dd>先行作業A</dd>
              <dt>Start date:</dt><dd>05/11/2026</dd>
              <dt>Due date:</dt><dd class="overdue">05/18/2026 (6 days late)</dd>
              <dt>% Done:</dt><dd class="done"><span class="progress"></span>0%</dd>
              <dt>Estimated time:</dt><dd>${nothing}</dd>
              <dt>MyPriority:</dt><dd>High</dd>
            </dl>
            <div class="block first"><h3>Subtasks</h3><a class="add" href="#">Add</a></div>
            <div class="block">
              <h3>Related issues</h3>
              <span class="count">3</span>
              <span class="sum">(<a href="#">3 open</a> — 0 closed)</span>
              <a class="add" href="#">Add</a>
            </div>
            <table class="rel">
              <tbody>
                ${relations.map((r) => this.row(r))}
              </tbody>
            </table>
          </section>

          <nav class="tabs">
            <a href="#">History</a><a class="on" href="#">Notes</a><a href="#">Property changes</a>
          </nav>
          <section class="journal">
            <span class="dot"></span>
            <div class="note-head">
              <span>Updated by <a href="#">Admin Redmine</a>&nbsp; <a href="#">[11/20/2023 11:24 PM] over 2 years</a>&nbsp; ago</span>
              <span class="note-icons gray">
                ${icon(28, svg`<path class="line round" d="M12.500 2C19 2 23 6.500 23 11.500S18.500 21 12.500 21c-1.500 0-3-.3-4.500-1-1.500 1.500-4 2.500-6.500 2.500 1.500-1.500 2-3 2-5C2 15.500 1 13.500 1 11.500 1 6.500 6 2 12.500 2z"/>`)}
                ${icon(28, pencil)} ${icon(28, fatDots)}
                <a class="num" href="#">#263</a>
              </span>
            </div>
            <div class="note">
              <p>インフラ要件</p>
              <ul>
                <li>Ubuntu 26.04</li>
                <li>MySQL 8.4</li>
              </ul>
            </div>
          </section>
        </div>
      </div>
      <div class="scroll"><div class="thumb"></div></div>
    `;
  }
}

/* ---------- window ---------- */

@customElement("app-root")
class AppRoot extends LitElement {
  static styles = [
    base,
    css`
      :host {
        height: 100vh;
        padding: 76px 112px 148px;
        background: #000;
        font-family: Inter, sans-serif;
      }
      .window {
        position: relative;
        display: flex;
        flex-direction: column;
        height: 100%;
        overflow: hidden;
        border-radius: 42px;
        background: linear-gradient(#e6dfb0 200px, #fdf8ee 200px);
      }
      .panes {
        flex: 1;
        min-height: 0;
        display: grid;
        grid-template-columns: minmax(0, 1fr) minmax(0, 1fr);
        grid-template-rows: minmax(0, 1fr);
        gap: 20px;
        padding: 0 18px 16px 16px;
        background: #fdf8ee;
      }
      .frame {
        --edge: #bdb8a4;
        position: relative;
        min-height: 0;
        padding: 8px;
        border: 2px solid var(--edge);
        border-radius: 18px;
      }
      .active {
        --edge: #716c56;
      }
      .notch {
        position: absolute;
        right: -2px;
        bottom: -2px;
        display: flex;
        align-items: center;
        height: 60px;
        border: 2px solid var(--edge);
        border-width: 2px 0 0 2px;
        border-radius: 18px 0 0 0;
        background: #fdf8ee;
        color: #45422f;
        font-size: 24px;
      }
      .notch::before,
      .notch::after {
        content: "";
        position: absolute;
        width: 18px;
        height: 18px;
        background: radial-gradient(circle at 0 0, transparent 16px, var(--edge) 16px, var(--edge) 18px, #fdf8ee 18px);
      }
      .notch::before {
        right: 0;
        bottom: 100%;
      }
      .notch::after {
        right: 100%;
        bottom: 0;
      }
      .site {
        gap: 12px;
        padding: 6px 14px 0;
      }
      .site button {
        margin-left: 14px;
      }
      .bare {
        padding: 0 15px 0 19px;
      }
      .cursor {
        position: absolute;
        left: 71%;
        bottom: 54px;
      }
    `,
  ];

  render() {
    return html`
      <main class="window">
        <browser-bar></browser-bar>
        <div class="panes">
          <div class="frame">
            <trello-pane></trello-pane>
            <div class="notch site">
              ${icon(32, trelloTab, 32)}<span>trello.com</span>
              <button aria-label="Close pane">${icon(24, cross)}</button>
            </div>
          </div>
          <div class="frame active">
            <redmine-pane></redmine-pane>
            <div class="notch bare"><button aria-label="Close pane">${icon(24, cross)}</button></div>
          </div>
        </div>
        <svg class="cursor" width="26" height="38" viewBox="0 0 26 38" aria-hidden="true">
          <path d="M4 2v28l6-6 5 11 5-2-5-11h8z" fill="#000" stroke="#fff" stroke-width="2" />
        </svg>
      </main>
    `;
  }
}
